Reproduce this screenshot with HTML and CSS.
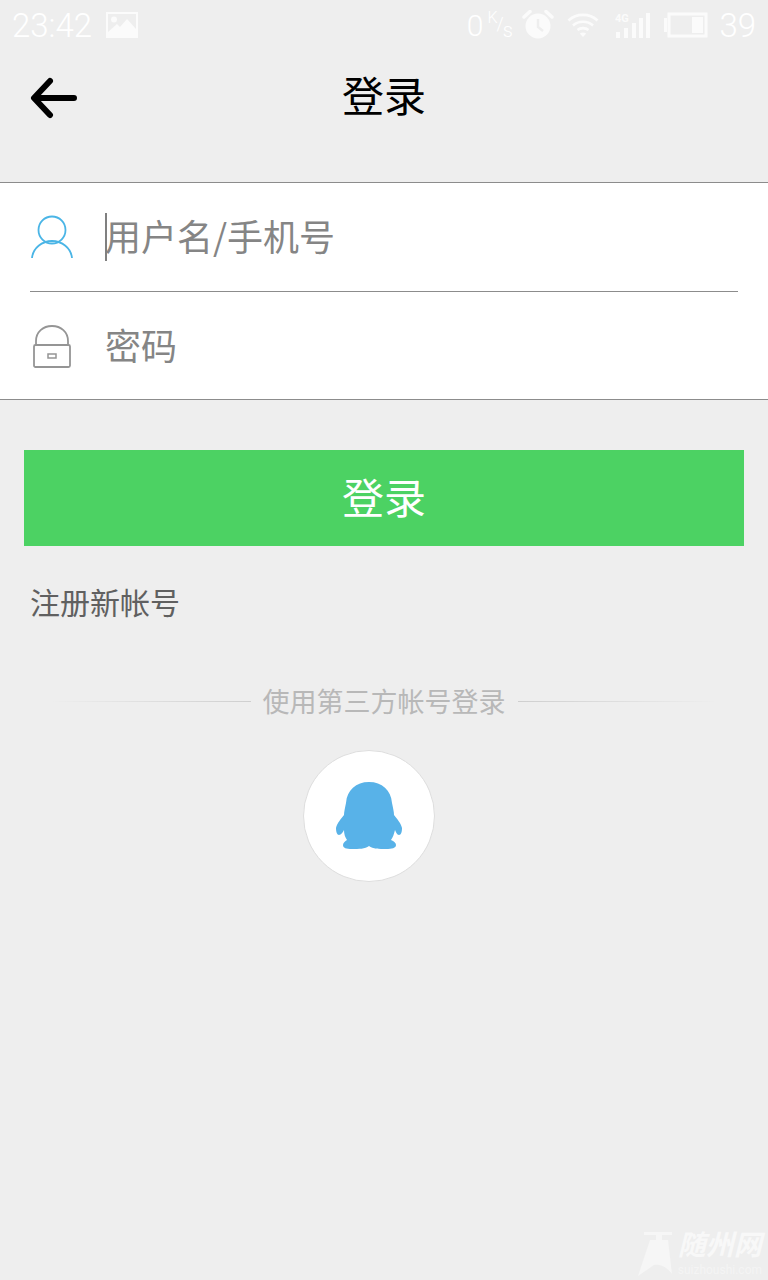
FILE: index.html
```html
<!DOCTYPE html>
<html lang="zh-CN">
<head>
    <meta charset="UTF-8">
    <meta name="viewport" content="width=device-width, initial-scale=1.0">
    <title>登录</title>
    <link rel="stylesheet" href="styles.css">
</head>
<body>

    <!-- Status bar -->
    <div class="status-bar">
        <span class="status-time">23:42</span>
        <svg class="icon-picture" width="32" height="26" viewBox="0 0 32 26">
            <path fill="#fbfbfb" fill-rule="evenodd" d="M0 0H32V26H0ZM2 2V20L11 12L14 15L21 7L30 17V2ZM8 4.500A3 3 0 1 0 8 10.500A3 3 0 1 0 8 4.500Z"/>
        </svg>
        <div class="status-right">
            <span class="status-speed">0</span>
            <span class="status-unit"><span class="unit-k">K</span><span class="unit-slash">/</span><span class="unit-s">s</span></span>
            <svg class="icon-alarm" width="32" height="30" viewBox="0 0 32 30">
                <circle cx="16" cy="16" r="12.500" fill="#fbfbfb"/>
                <path d="M16 9V17L21 21" fill="none" stroke="#eeeeee" stroke-width="2.500"/>
                <path d="M2 7L8 1.500M30 7L24 1.500" stroke="#fbfbfb" stroke-width="3.500" stroke-linecap="round"/>
            </svg>
            <svg class="icon-wifi" width="32" height="26" viewBox="0 0 32 26">
                <path d="M1.500 8.500C9.500 1 22.500 1 30.500 8.500M6 13.500C11.500 8.500 20.500 8.500 26 13.500M10.500 18C13.500 15.500 18.500 15.500 21.500 18" fill="none" stroke="#fbfbfb" stroke-width="2.600"/>
                <path d="M12.800 21.500L16 25L19.200 21.500C17.500 20 14.500 20 12.800 21.500Z" fill="#fbfbfb"/>
            </svg>
            <svg class="icon-signal" width="36" height="26" viewBox="0 0 36 26">
                <text class="signal-label" x="0" y="10">4G</text>
                <rect x="1" y="20" width="4" height="6" fill="#fbfbfb"/>
                <rect x="9" y="16" width="4" height="10" fill="#fbfbfb"/>
                <rect x="17" y="11" width="4" height="15" fill="#fbfbfb"/>
                <rect x="24" y="6" width="4" height="20" fill="#fbfbfb"/>
                <rect x="31" y="1" width="4" height="25" fill="#fbfbfb"/>
            </svg>
            <svg class="icon-battery" width="44" height="26" viewBox="0 0 44 26">
                <path fill="#fbfbfb" d="M0 6H3V20H0Z"/>
                <rect x="5" y="2" width="37" height="22" fill="none" stroke="#fbfbfb" stroke-width="3"/>
                <rect x="28" y="5" width="11" height="16" fill="#fbfbfb"/>
            </svg>
            <span class="status-level">39</span>
        </div>
    </div>

    <!-- Title bar -->
    <div class="title-bar">
        <svg class="back-arrow" width="48" height="42" viewBox="0 0 48 42">
            <path d="M44 21H5M20 4L4 21L20 38" fill="none" stroke="#000" stroke-width="6" stroke-linecap="round" stroke-linejoin="round"/>
        </svg>
        <h1>登录</h1>
    </div>

    <!-- Login form -->
    <div class="form-box">
        <div class="form-row form-row-first">
            <svg class="row-icon" width="42" height="44" viewBox="0 0 42 44">
                <circle cx="21" cy="15" r="13.500" fill="none" stroke="#4ab5e6" stroke-width="1.800"/>
                <path d="M1 43C2 33 11 26 21 26C31 26 40 33 41 43" fill="none" stroke="#4ab5e6" stroke-width="1.800"/>
            </svg>
            <span class="caret"></span>
            <span class="row-text">用户名/手机号</span>
        </div>
        <div class="form-row">
            <svg class="row-icon" width="42" height="44" viewBox="0 0 42 44">
                <path d="M5 20V17C5 8 12 2 21 2C30 2 37 8 37 17V20" fill="none" stroke="#959595" stroke-width="1.800"/>
                <rect x="3" y="21" width="36" height="22" rx="1.500" fill="none" stroke="#959595" stroke-width="1.800"/>
                <rect x="17" y="30" width="8" height="4" fill="none" stroke="#959595" stroke-width="1.500"/>
            </svg>
            <span class="row-text row-text-plain">密码</span>
        </div>
    </div>

    <button class="login-btn">登录</button>

    <a class="register-link">注册新帐号</a>

    <!-- Third party login -->
    <div class="divider">
        <span class="divider-line divider-left"></span>
        <span class="divider-text">使用第三方帐号登录</span>
        <span class="divider-line divider-right"></span>
    </div>

    <div class="qq-circle">
        <svg width="68" height="68" viewBox="0 0 68 68">
            <path fill="#58b2e8" d="M34 0C47 0 56 8 57 21C58 26 59 30 59 33C62 37 66 41 67 46C67 50 66 53 64 53C62 53 61 50 60 48C59 52 58 55 56 58C59 59 61 61 61 63C61 66 57 67 51 67C44 67 38 67 34 64C30 67 24 67 17 67C11 67 8 66 8 63C8 61 10 59 12 58C10 55 9 52 9 48C8 50 6 53 4 53C2 53 1 50 1 46C2 41 6 37 9 33C9 30 10 26 11 21C12 8 21 0 34 0Z"/>
        </svg>
    </div>

    <!-- Site mark -->
    <div class="site-mark">
        <svg width="38" height="44" viewBox="0 0 38 44">
            <path fill="#f6f6f6" d="M8 0H36V3H26V8H32L36 42C30 34 24 32 18 33L2 44L14 8H20V3H8Z"/>
        </svg>
        <div class="site-mark-text">
            <div class="site-name">随州网</div>
            <div class="site-url">suizhoushi.com</div>
        </div>
    </div>

</body>
</html>
```

FILE: styles.css
```css
body {
    font-family: "Noto Sans CJK SC", "Noto Sans", sans-serif;
    margin: 0;
    height: 1280px;
    position: relative;
    overflow: hidden;
    background: #eeeeee;
}
.status-bar {
    height: 50px;
    padding: 0 12px 0 12px;
    display: flex;
    align-items: center;
    color: #fff;
    font-family: Roboto, sans-serif;
    font-weight: 300;
}
.status-time {
    font-size: 33px;
}
.icon-picture {
    margin-left: 14px;
}
.status-right {
    margin-left: auto;
    display: flex;
    align-items: center;
}
.status-speed {
    font-size: 30px;
}
.status-unit {
    width: 25px;
    height: 30px;
    margin-left: 4px;
    display: flex;
    font-size: 18px;
    line-height: 18px;
}
.unit-k {
    font-size: 16px;
    line-height: 16px;
}
.unit-slash {
    margin: 5px 0 0 -1px;
}
.unit-s {
    margin: 11px 0 0 -1px;
    font-size: 20px;
}
.icon-alarm {
    margin-left: 10px;
}
.icon-wifi {
    margin-left: 13px;
}
.icon-signal {
    margin-left: 16px;
}
.icon-battery {
    margin-left: 13px;
}
.signal-label {
    font-size: 11px;
    font-weight: 700;
    fill: #fbfbfb;
}
.status-level {
    font-size: 33px;
    margin-left: 11px;
}
.title-bar {
    height: 94px;
    margin-bottom: 38px;
    position: relative;
    display: flex;
    align-items: center;
    justify-content: center;
}
.title-bar h1 {
    margin: 0;
    padding-bottom: 8px;
    font-size: 42px;
    font-weight: 400;
    color: #000;
}
.back-arrow {
    position: absolute;
    left: 30px;
    top: 27px;
}
.form-box {
    background: #fff;
    border-top: 1px solid #8c8c8c;
    border-bottom: 1px solid #8c8c8c;
    padding: 0 30px;
}
.form-row {
    box-sizing: border-box;
    height: 107px;
    display: flex;
    align-items: center;
}
.form-row-first {
    height: 109px;
    border-bottom: 1px solid #8c8c8c;
}
.row-icon {
    margin-left: 1px;
    margin-right: 32px;
    flex: none;
}
.caret {
    width: 2px;
    height: 48px;
    background: #808080;
    margin-right: -2px;
}
.row-text {
    padding-bottom: 4px;
    font-size: 36px;
    color: #858585;
}
.login-btn {
    display: block;
    width: 720px;
    height: 96px;
    margin: 50px 24px 0;
    padding: 0 0 6px;
    border: none;
    background: #4cd263;
    color: #fff;
    font-family: inherit;
    font-size: 42px;
}
.register-link {
    display: block;
    margin: 33px 0 0 30px;
    font-size: 30px;
    line-height: 44px;
    color: #606060;
}
.divider {
    margin-top: 57px;
    padding: 0 50px;
    display: flex;
    align-items: center;
    justify-content: center;
    gap: 12px;
}
.divider-line {
    flex: 1;
    height: 1px;
}
.divider-left {
    background: linear-gradient(to right, #eeeeee, #cfcfcf);
}
.divider-right {
    background: linear-gradient(to left, #eeeeee, #cfcfcf);
}
.divider-text {
    font-size: 27px;
    line-height: 42px;
    color: #b8b8b8;
}
.qq-circle {
    width: 130px;
    height: 130px;
    margin: 28px 0 0 303px;
    border: 1px solid #dedede;
    border-radius: 50%;
    background: #fff;
    display: flex;
    align-items: center;
    justify-content: center;
}
.site-mark {
    position: absolute;
    right: 6px;
    bottom: 4px;
    display: flex;
    align-items: flex-end;
    gap: 4px;
}
.site-name {
    height: 28px;
    margin-bottom: 7px;
    font-size: 28px;
    line-height: 28px;
    font-weight: 700;
    font-style: italic;
    color: #f8f8f8;
}
.site-url {
    font-family: Roboto, sans-serif;
    font-size: 12px;
    line-height: 12px;
    color: #f4f4f4;
}
```
